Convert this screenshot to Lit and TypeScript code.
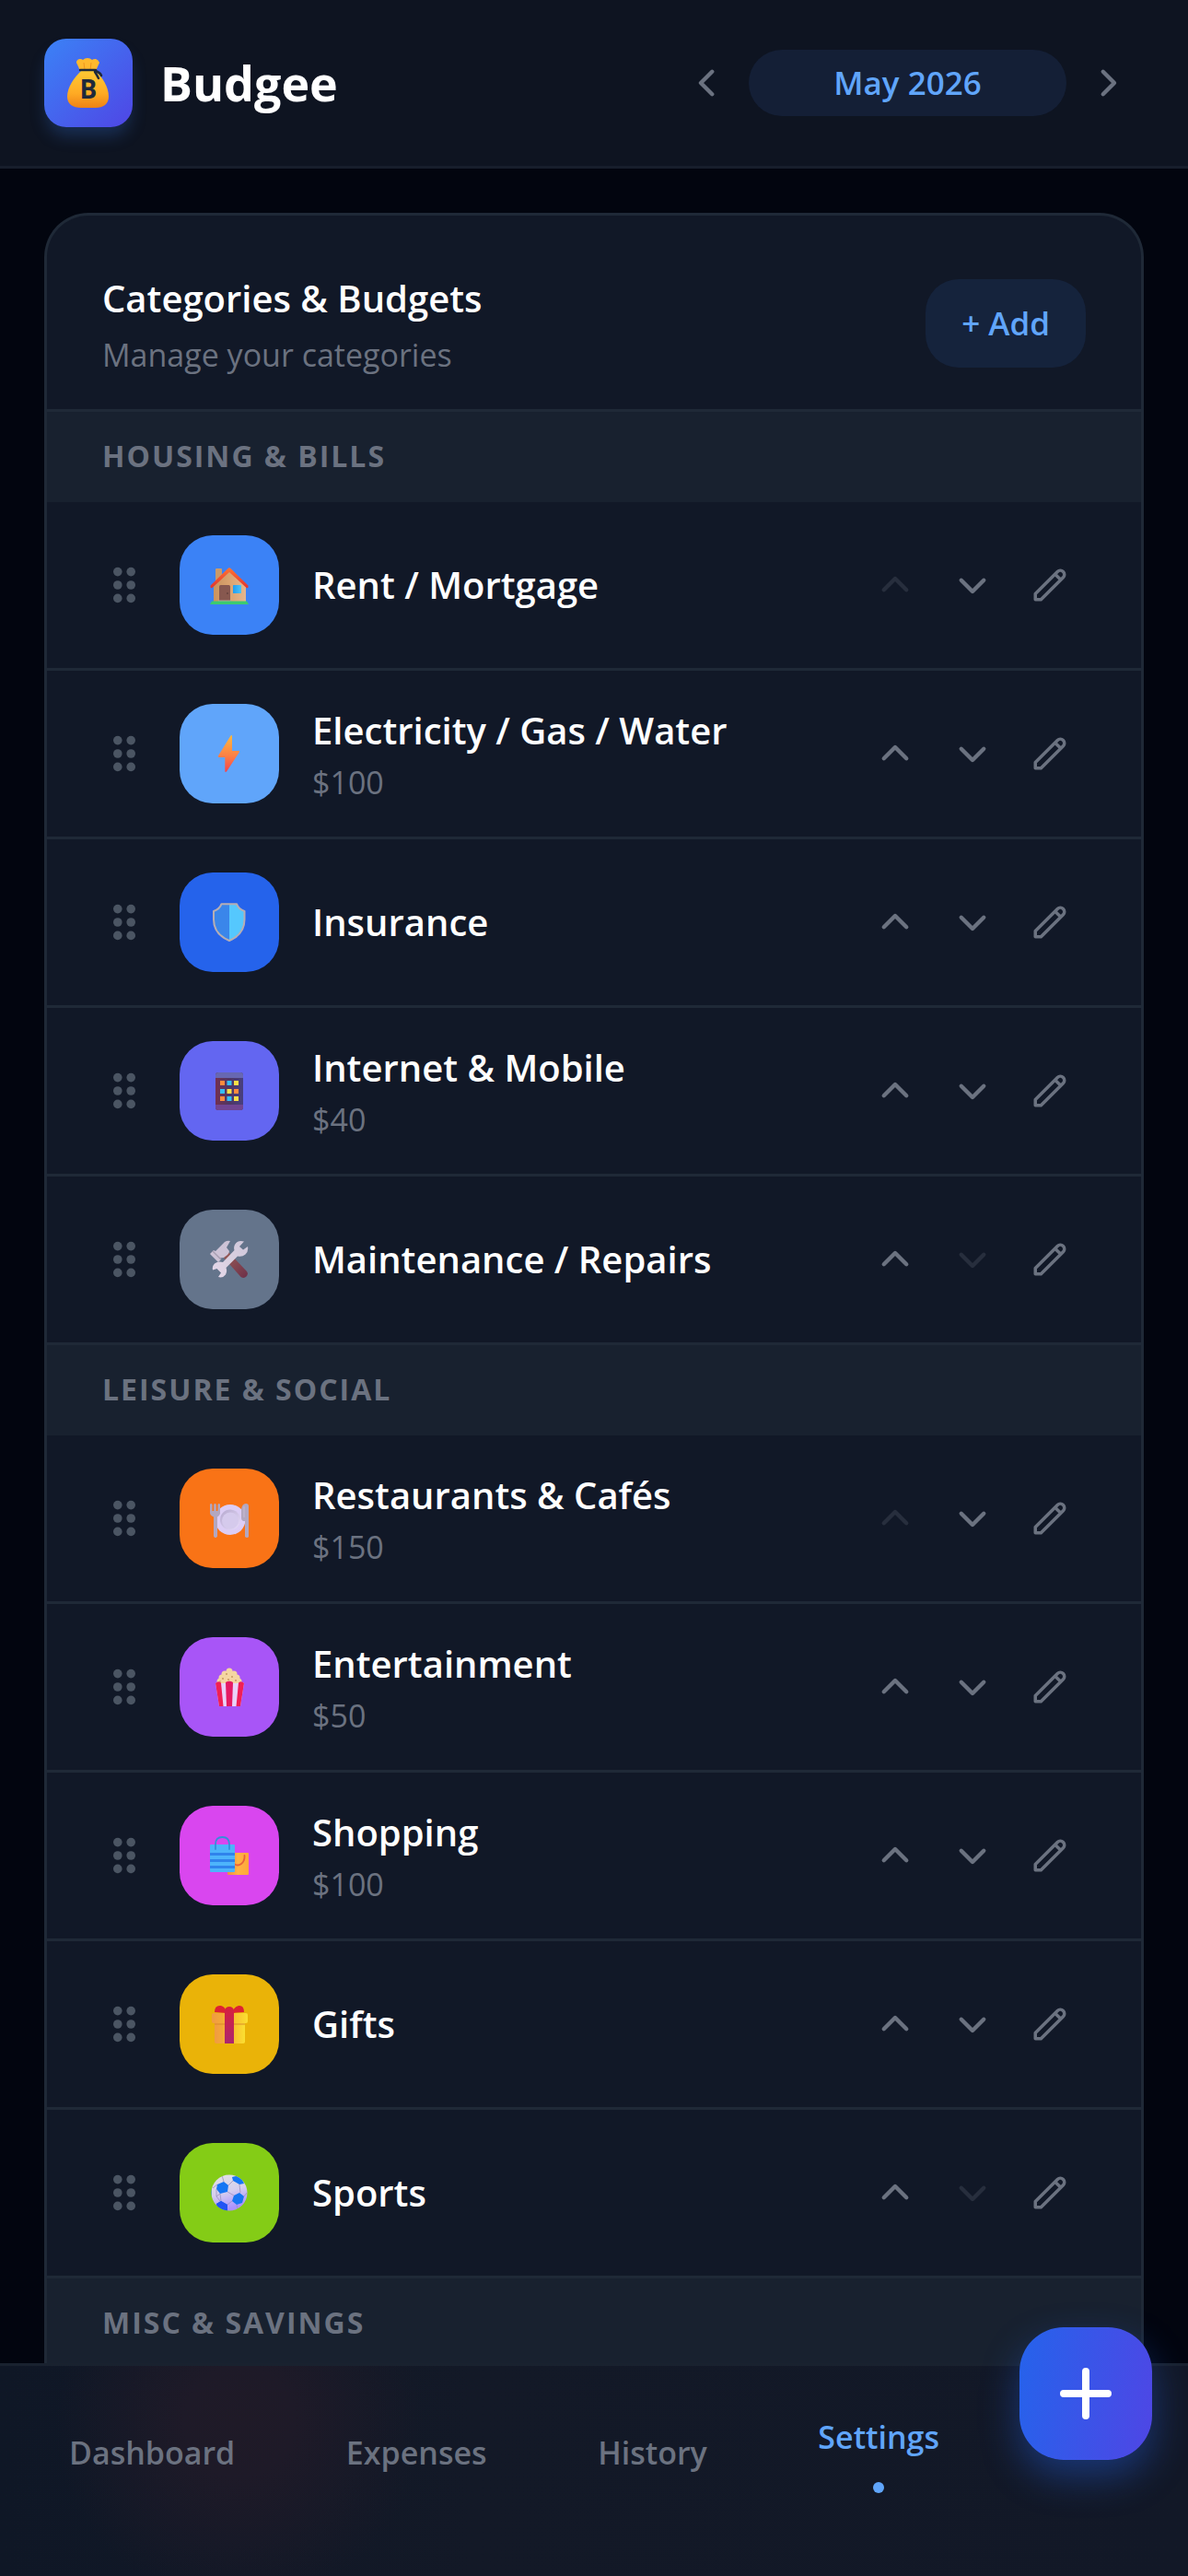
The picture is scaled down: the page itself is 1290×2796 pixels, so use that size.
import { LitElement, html, svg, css, nothing, TemplateResult } from 'lit';
import { customElement, property, state } from 'lit/decorators.js';
import { classMap } from 'lit/directives/class-map.js';

interface Category {
  name: string;
  budget?: number;
  icon: string;
  color: string;
}

interface Group {
  title: string;
  items: Category[];
}

const GROUPS: Group[] = [
  {
    title: 'HOUSING & BILLS',
    items: [
      { name: 'Rent / Mortgage', icon: 'house', color: '#3b82f6' },
      { name: 'Electricity / Gas / Water', budget: 100, icon: 'bolt', color: '#60a5fa' },
      { name: 'Insurance', icon: 'shield', color: '#2563eb' },
      { name: 'Internet & Mobile', budget: 40, icon: 'phone', color: '#6366f1' },
      { name: 'Maintenance / Repairs', icon: 'tools', color: '#64748b' },
    ],
  },
  {
    title: 'LEISURE & SOCIAL',
    items: [
      { name: 'Restaurants & Cafés', budget: 150, icon: 'plate', color: '#f97316' },
      { name: 'Entertainment', budget: 50, icon: 'popcorn', color: '#a855f7' },
      { name: 'Shopping', budget: 100, icon: 'bags', color: '#d946ef' },
      { name: 'Gifts', icon: 'gift', color: '#eab308' },
      { name: 'Sports', icon: 'ball', color: '#84cc16' },
    ],
  },
  { title: 'MISC & SAVINGS', items: [] },
];

// Category pictures, all on a 42 x 42 canvas
const PICTURES: Record<string, TemplateResult> = {
  house: svg`
    <defs>
      <linearGradient id="wall" x1="0" x2="1"><stop offset="0" stop-color="#c9935f"/><stop offset="0.5" stop-color="#dba36f"/><stop offset="1" stop-color="#e3b78f"/></linearGradient>
      <linearGradient id="roof" x1="0" y1="0" x2="0" y2="1"><stop offset="0" stop-color="#ff7434"/><stop offset="1" stop-color="#e0332f"/></linearGradient>
      <linearGradient id="pane" x1="0" x2="1"><stop offset="0" stop-color="#1f9df0"/><stop offset="1" stop-color="#4cc4fb"/></linearGradient>
    </defs>
    <rect x="6" y="3" width="7" height="16" rx="1" fill="#c99a6b"/>
    <path d="M4 21 21 5l18 16v18H4z" fill="url(#wall)"/>
    <path d="M0.500 21.500 19.500 3q1.500-1.500 3 0L41.500 21.500v2q-1 1.500-2.500 0L21 7 3 23.500q-1.500 1.500-2.500 0z" fill="url(#roof)"/>
    <rect x="10" y="21" width="12" height="18" rx="1.500" fill="#87584f"/>
    <circle cx="19" cy="30" r="1" fill="#64403c"/>
    <rect x="25" y="21" width="9" height="9" rx="0.500" fill="url(#pane)"/>
    <path d="M9 37.500h14v2H9z" fill="#b8a79e"/>
    <path d="M2 38.500h38l2 3.500H0z" fill="#3ccb70"/>`,
  bolt: svg`
    <defs><linearGradient id="bolt" x1="0" y1="0" x2="0" y2="1"><stop offset="0" stop-color="#fdb840"/><stop offset="0.550" stop-color="#fb8146"/><stop offset="1" stop-color="#f4434c"/></linearGradient></defs>
    <path d="M22.500 1.500Q24 0.500 24 2v16h7q1.500 0 0.800 1.500L18 40.500q-1.700 1.200-1.700-0.800V25H10q-1.800-0.200-0.800-2z" fill="url(#bolt)"/>`,
  shield: svg`
    <path d="M13 1.500h16q2.500 5.500 8.500 8v9Q37 34 21 41 4 34 4 18.500V9.500Q10.500 7 13 1.500z" fill="#3a86ea"/>
    <path d="M21 1.500h8q2.500 5.500 8 8v9Q37 34 21 41z" fill="#55c8fe"/>
    <path d="M12.500 1.200h16.500q2 5.800 8.500 7.800v9Q37.500 34 21 41 4 34 4 18V9q6.500-2 8.500-7.800z" fill="none" stroke="#b6aeb4" stroke-width="2" stroke-linejoin="round"/>`,
  phone: svg`
    <defs><linearGradient id="case" x1="0" x2="1"><stop offset="0" stop-color="#74304f"/><stop offset="0.500" stop-color="#4f3664"/><stop offset="1" stop-color="#473f80"/></linearGradient></defs>
    <rect x="6" y="1" width="30" height="41" rx="3" fill="url(#case)"/>
    <path d="M6 7V4q0-3 3-3h24q3 0 3 3v3z" fill="#6767b2"/>
    <path d="M6 36h30v3q0 3-3 3H9q-3 0-3-3z" fill="#704592"/>
    <g fill="#ff8b3d"><rect x="11" y="10" width="5" height="5"/><rect x="26" y="19" width="5" height="5"/><rect x="11" y="27" width="5" height="5"/></g>
    <g fill="#35bdf8"><rect x="18.500" y="10" width="5" height="5"/><rect x="11" y="19" width="5" height="5"/><rect x="18.500" y="27" width="5" height="5"/></g>
    <g fill="#fde047"><rect x="26" y="10" width="5" height="5"/><rect x="18.500" y="19" width="5" height="5"/><rect x="26" y="27" width="5" height="5"/></g>`,
  tools: svg`
    <defs>
      <linearGradient id="grip" x1="0" y1="0" x2="1" y2="1"><stop offset="0" stop-color="#9c6058"/><stop offset="1" stop-color="#6d2f49"/></linearGradient>
      <linearGradient id="steel" x1="1" y1="0" x2="0" y2="1"><stop offset="0" stop-color="#cfc6da"/><stop offset="0.500" stop-color="#d9d0e0"/><stop offset="1" stop-color="#e6d8ea"/></linearGradient>
    </defs>
    <path d="M13 17l6-5 21 22q2 3-0.500 5.500t-6 0.500z" fill="url(#grip)"/>
    <path d="M0 15l4-4 2 1L16 2q3-2 6-1l-4 7 3 4q0 2-2 4l-4 3-4 0.500 0.500 2L9 24z" fill="#cdc3d6"/>
    <path d="M3 12l9 9" stroke="#a79fb2" stroke-width="1.500"/>
    <path d="M37 1.500Q30-0.500 27 5q-1.500 3-0.500 6L14 24q-5-1.500-9 1.500-3 3-2 7l4.500-1.500 4.500 4.500L9 40q5 1.500 8-2.500 2-3.500 0.500-7.500L30 17.500q5 1 8.500-2 3.500-3.500 2.500-8.500L36 10.500 32 7z" fill="url(#steel)"/>`,
  plate: svg`
    <defs><linearGradient id="dish" x1="0" y1="0" x2="1" y2="1"><stop offset="0" stop-color="#b5a8ce"/><stop offset="1" stop-color="#e9defa"/></linearGradient></defs>
    <circle cx="22" cy="22.500" r="16.500" fill="#dccdf5"/>
    <circle cx="22" cy="22.500" r="11" fill="url(#dish)"/>
    <circle cx="22" cy="23.500" r="9" fill="#d5caec"/>
    <path d="M0 6q1-2 2.500 0v7h1.700V6q1.300-2 2.600 0v7h1.700V6q1.500-2 2.500 0v10q-1 2.500-3 3.500v21q-2 3-4 0v-21Q0 17.500 0 15z" fill="#b3a7c0"/>
    <path d="M34 11q1-6 5-6 3 0 3 3v33q-1.500 2-4 0V24h-2q-2-1-2-3z" fill="#b3a7c0"/>
    <path d="M37 8v12" stroke="#c6bbd2" stroke-width="1"/>`,
  popcorn: svg`
    <g fill="#f4d6a2">
      <circle cx="21" cy="4" r="3.500"/><circle cx="16" cy="7" r="3.500"/><circle cx="26" cy="7" r="3.500"/><circle cx="21" cy="9" r="4"/>
      <circle cx="13" cy="11" r="3.500"/><circle cx="29" cy="11" r="3.500"/><circle cx="11" cy="15" r="3.500"/><circle cx="17" cy="14" r="4"/><circle cx="25" cy="14" r="4"/><circle cx="31" cy="15" r="3.500"/>
    </g>
    <g fill="#c99a5e"><circle cx="18" cy="7" r="1"/><circle cx="24" cy="10" r="1"/><circle cx="14" cy="12" r="1"/><circle cx="20" cy="13" r="1"/><circle cx="28" cy="14" r="1"/><circle cx="11" cy="15" r="0.800"/></g>
    <path d="M6 17q3-3 6 0h18q4-3 7 0l-4 25H10z" fill="#ead2fa"/>
    <path d="M6 17q3-3 6-0.500L14.500 42H10z" fill="#f01f56"/>
    <path d="M17 16q4-2.500 8 0L24 42h-6z" fill="#e51a63"/>
    <path d="M31 16.500q3-2.500 6 0.500l-4 25h-4.500z" fill="#f01f56"/>`,
  bags: svg`
    <defs><linearGradient id="sack" x1="0" x2="1"><stop offset="0" stop-color="#f08a45"/><stop offset="0.500" stop-color="#ffb345"/><stop offset="1" stop-color="#ffa83a"/></linearGradient></defs>
    <rect x="19" y="18" width="23" height="24" rx="1" fill="url(#sack)"/>
    <path d="M26 30q4 3 8 0 4-3 3.500-9" fill="none" stroke="#e9613c" stroke-width="1.800" stroke-linecap="round"/>
    <rect x="0" y="9" width="27" height="30" rx="1" fill="#4db4fb"/>
    <path d="M0 18h27v3H0zM0 25h27v3H0zM0 32h27v3H0z" fill="#2f83ec"/>
    <path d="M6 14V9q0-8 7.500-8T21 9v5" fill="none" stroke="#348edb" stroke-width="1.800" stroke-linecap="round"/>`,
  gift: svg`
    <defs>
      <linearGradient id="carton" x1="0" x2="1"><stop offset="0" stop-color="#f09a42"/><stop offset="0.500" stop-color="#f7b52f"/><stop offset="1" stop-color="#fbdf31"/></linearGradient>
      <linearGradient id="ribbon" x1="0" y1="0" x2="0" y2="1"><stop offset="0" stop-color="#d8203c"/><stop offset="1" stop-color="#ab2670"/></linearGradient>
    </defs>
    <rect x="5" y="18" width="33" height="24" rx="2" fill="url(#carton)"/>
    <path d="M5 20h33v2H5z" fill="#d98a2a" opacity="0.500"/>
    <path d="M5 8q0-8 7-7 5 1 6 8zM37 8q0-8-6-7-5 1-7 8z" fill="#de2232"/>
    <rect x="2" y="9" width="39" height="11" rx="2" fill="url(#carton)"/>
    <path d="M16 6q1-4 5-4t5 4v36H16z" fill="url(#ribbon)"/>`,
  ball: svg`
    <defs>
      <linearGradient id="leather" x1="0" y1="0" x2="0.300" y2="1"><stop offset="0" stop-color="#e3e3e3"/><stop offset="0.550" stop-color="#d6cfee"/><stop offset="1" stop-color="#ab92ff"/></linearGradient>
      <clipPath id="round"><circle cx="21" cy="21" r="19.500"/></clipPath>
    </defs>
    <circle cx="21" cy="21" r="19.500" fill="url(#leather)"/>
    <g clip-path="url(#round)">
      <path d="M8 12l7-3 5 4-1 7-8 2-4-5zM26 24l6-3 5 4-2 7-6 2-5-4zM24 4l9-2 4 9-5 1-7-4zM7 33l5-3 7 4v7H9zM0 14h2v12H0z" fill="#1676f3"/>
      <path d="M7 33l5-3 7 4v7H9z" fill="#2453f4"/>
      <path d="M15 9l-2-7M20 13l5-5M8 12L3 16M7 17v8l4 5M11 22l-4 3M19 20l7 4M12 30l-1-8M32 12l1 9M37 25l4-5M24 30l-5 4M29 34l1 5" fill="none" stroke="#9b92bd" stroke-width="0.800"/>
    </g>`,
};

// Line icons, all on a 24 x 24 canvas
const STROKES: Record<string, string> = {
  left: 'M15 19l-7-7 7-7',
  right: 'M9 5l7 7-7 7',
  up: 'M5 15l7-7 7 7',
  down: 'M19 9l-7 7-7-7',
  pencil:
    'M15.232 5.232l3.536 3.536m-2.036-5.036a2.500 2.500 0 113.536 3.536L6.500 21.036H3v-3.572L16.732 3.732z',
};

@customElement('icon-button')
class IconButton extends LitElement {
  static styles = css`
    :host {
      display: block;
    }
    button {
      display: block;
      padding: 18px;
      border: 0;
      background: none;
      color: #6b7280;
      cursor: pointer;
    }
    button:disabled {
      opacity: 0.25;
      cursor: default;
    }
    svg {
      display: block;
      width: 42px;
      height: 42px;
      fill: none;
      stroke: currentColor;
      stroke-width: 2.5;
      stroke-linecap: round;
      stroke-linejoin: round;
    }
    .pencil {
      stroke-width: 2;
    }
  `;

  @property() icon = 'up';
  @property() label = '';
  @property({ type: Boolean }) disabled = false;

  render() {
    return html`
      <button type="button" aria-label=${this.label} ?disabled=${this.disabled}>
        <svg class=${this.icon} viewBox="0 0 24 24"><path d=${STROKES[this.icon]} /></svg>
      </button>
    `;
  }
}

@customElement('category-row')
class CategoryRow extends LitElement {
  static styles = css`
    :host {
      display: flex;
      align-items: center;
      gap: 36px;
      padding: 36px 60px;
      border-bottom: 3px solid #1f2937;
    }
    .grip {
      width: 48px;
      height: 48px;
      fill: #4b5563;
    }
    .tile {
      display: grid;
      place-items: center;
      width: 108px;
      height: 108px;
      border-radius: 36px;
    }
    .picture {
      width: 42px;
      height: 42px;
      overflow: visible;
    }
    .info {
      flex: 1;
    }
    .name {
      color: #fff;
      font-size: 40px;
      font-weight: 600;
      line-height: 54px;
    }
    .budget {
      margin-top: 8px;
      color: #6b7280;
      font-size: 34px;
      line-height: 42px;
    }
    .actions {
      display: flex;
      gap: 6px;
    }
  `;

  @property({ attribute: false }) category!: Category;
  @property({ type: Boolean }) first = false;
  @property({ type: Boolean }) last = false;

  render() {
    const { name, budget, icon, color } = this.category;
    return html`
      <svg class="grip" viewBox="0 0 20 20">
        ${[4, 10, 16].map((y) => svg`<circle cx="7" cy=${y} r="2"/><circle cx="13" cy=${y} r="2"/>`)}
      </svg>
      <div class="tile" style="background:${color}">
        <svg class="picture" viewBox="0 0 42 42">${PICTURES[icon]}</svg>
      </div>
      <div class="info">
        <div class="name">${name}</div>
        ${budget ? html`<div class="budget">$${budget}</div>` : nothing}
      </div>
      <div class="actions">
        <icon-button icon="up" label="Move up" ?disabled=${this.first}></icon-button>
        <icon-button icon="down" label="Move down" ?disabled=${this.last}></icon-button>
        <icon-button icon="pencil" label="Edit"></icon-button>
      </div>
    `;
  }
}

@customElement('app-root')
class AppRoot extends LitElement {
  static styles = css`
    :host {
      display: flex;
      flex-direction: column;
      height: 100vh;
      background: #02050f;
      font-family: 'Segoe UI', 'Open Sans', 'Noto Sans', sans-serif;
    }
    button {
      border: 0;
      font-family: inherit;
      cursor: pointer;
    }

    /* Top bar */
    header {
      display: flex;
      align-items: center;
      justify-content: space-between;
      padding: 42px 48px;
      background: #0e1421;
      border-bottom: 3px solid #171e2c;
    }
    .brand {
      display: flex;
      align-items: center;
      gap: 30px;
    }
    .logo {
      display: grid;
      place-items: center;
      width: 96px;
      height: 96px;
      border-radius: 24px;
      background: linear-gradient(135deg, #3b82f6, #4f46e5);
      box-shadow: 0 12px 18px -3px rgba(59, 130, 246, 0.25);
    }
    .logo svg {
      width: 46px;
      height: 54px;
    }
    .logo text {
      font-size: 28px;
      font-weight: 700;
    }
    h1 {
      margin: 0;
      color: #fff;
      font-size: 52px;
      font-weight: 700;
      line-height: 72px;
    }
    .month {
      display: flex;
      align-items: center;
      gap: 6px;
    }
    .month-name {
      min-width: 345px;
      padding: 9px 36px;
      border-radius: 36px;
      background: #141f36;
      color: #60a5fa;
      font-size: 35px;
      font-weight: 600;
      line-height: 54px;
    }

    /* Category list */
    main {
      flex: 1;
      min-height: 0;
      padding: 48px 48px 0;
      overflow: hidden;
    }
    .card {
      overflow: hidden;
      border: 3px solid #1f2937;
      border-bottom: 0;
      border-radius: 48px 48px 0 0;
      background: #111827;
    }
    .card-head {
      display: flex;
      align-items: center;
      justify-content: space-between;
      padding: 60px 60px 36px;
      border-bottom: 3px solid #1f2937;
    }
    .card-head h2 {
      margin: 0 0 8px;
      color: #fff;
      font-size: 40px;
      font-weight: 600;
      line-height: 60px;
    }
    .card-head p {
      margin: 0;
      color: #6b7280;
      font-size: 34px;
      line-height: 46px;
    }
    .add {
      padding: 21px 39px;
      border-radius: 36px;
      background: #15233c;
      color: #60a5fa;
      font-size: 35px;
      font-weight: 600;
      line-height: 54px;
    }
    h3 {
      margin: 0;
      padding: 24px 60px 26px;
      background: #18212f;
      color: #6b7280;
      font-size: 32px;
      font-weight: 700;
      letter-spacing: 2px;
      line-height: 48px;
    }

    /* Bottom bar */
    nav {
      position: relative;
      display: flex;
      align-items: center;
      justify-content: space-between;
      height: 188px;
      padding: 0 270px 40px 75px;
      border-top: 3px solid #19222f;
      background:
        radial-gradient(circle at 260px 60px, #1f1a27, #1e1a28 60px, rgba(30, 26, 40, 0) 200px),
        linear-gradient(90deg, #0f1726, #131927 40%, #121827);
    }
    nav a {
      display: flex;
      flex-direction: column;
      align-items: center;
      gap: 22px;
      color: #6b7280;
      font-size: 34px;
      font-weight: 600;
      line-height: 54px;
      text-decoration: none;
    }
    nav a.active {
      color: #60a5fa;
    }
    nav a.active::after {
      content: '';
      width: 12px;
      height: 12px;
      border-radius: 50%;
      background: #60a5fa;
    }
    .fab {
      position: absolute;
      top: -42px;
      right: 39px;
      display: grid;
      place-items: center;
      width: 144px;
      height: 144px;
      padding: 0;
      border-radius: 48px;
      background: linear-gradient(100deg, #2563eb, #4f46e5);
      box-shadow: 0 18px 42px rgba(37, 99, 235, 0.4);
    }
    .fab svg {
      width: 72px;
      height: 72px;
      fill: none;
      stroke: #fff;
      stroke-width: 8;
      stroke-linecap: round;
    }
  `;

  @state() private tab = 'Settings';

  _selectTab(event: Event, tab: string) {
    event.preventDefault();
    this.tab = tab;
  }

  _renderLogo() {
    return html`
      <svg viewBox="0 0 46 54">
        <defs>
          <linearGradient id="bag" x1="0" y1="0" x2="0" y2="1">
            <stop offset="0" stop-color="#ffc933" />
            <stop offset="0.6" stop-color="#ffab24" />
            <stop offset="1" stop-color="#ee8216" />
          </linearGradient>
        </defs>
        <path d="M10 4q1-3 4-3 2 0 3 1 2-2 5-2t5 2q1-1 4-1 3 1 4 4-2 4-4 9H14q-2-5-4-9z" fill="#ffb92e" />
        <path d="M18 5l1 8M26 5l-1 8" stroke="#ee951f" stroke-width="1" />
        <path
          d="M15 14h16C38 21 45 31 45 42 45 50 39 54 31 54H15C6 54 0 50 0 42 0 31 8 21 15 14z"
          fill="url(#bag)"
        />
        <path
          d="M14 13h17M31 14q5 2 6 5M30 15q2 3 4 7"
          fill="none"
          stroke="#1e293b"
          stroke-width="2.5"
          stroke-linecap="round"
        />
        <text x="23" y="44" text-anchor="middle" fill="#1e293b">B</text>
      </svg>
    `;
  }

  _renderGroup(group: Group) {
    return html`
      <section>
        <h3>${group.title}</h3>
        ${group.items.map(
          (category, i) => html`
            <category-row
              .category=${category}
              ?first=${i === 0}
              ?last=${i === group.items.length - 1}
            ></category-row>
          `
        )}
      </section>
    `;
  }

  render() {
    return html`
      <header>
        <div class="brand">
          <div class="logo">${this._renderLogo()}</div>
          <h1>Budgee</h1>
        </div>
        <div class="month">
          <icon-button icon="left" label="Previous month"></icon-button>
          <button type="button" class="month-name">May 2026</button>
          <icon-button icon="right" label="Next month"></icon-button>
        </div>
      </header>
      <main>
        <div class="card">
          <div class="card-head">
            <div>
              <h2>Categories & Budgets</h2>
              <p>Manage your categories</p>
            </div>
            <button type="button" class="add">+ Add</button>
          </div>
          ${GROUPS.map((group) => this._renderGroup(group))}
        </div>
      </main>
      <nav>
        ${['Dashboard', 'Expenses', 'History', 'Settings'].map(
          (tab) => html`
            <a
              href="#${tab.toLowerCase()}"
              class=${classMap({ active: tab === this.tab })}
              @click=${(e: Event) => this._selectTab(e, tab)}
            >${tab}</a>
          `
        )}
        <button type="button" class="fab" aria-label="Add expense">
          <svg viewBox="0 0 72 72"><path d="M36 12v48M12 36h48" /></svg>
        </button>
      </nav>
    `;
  }
}
